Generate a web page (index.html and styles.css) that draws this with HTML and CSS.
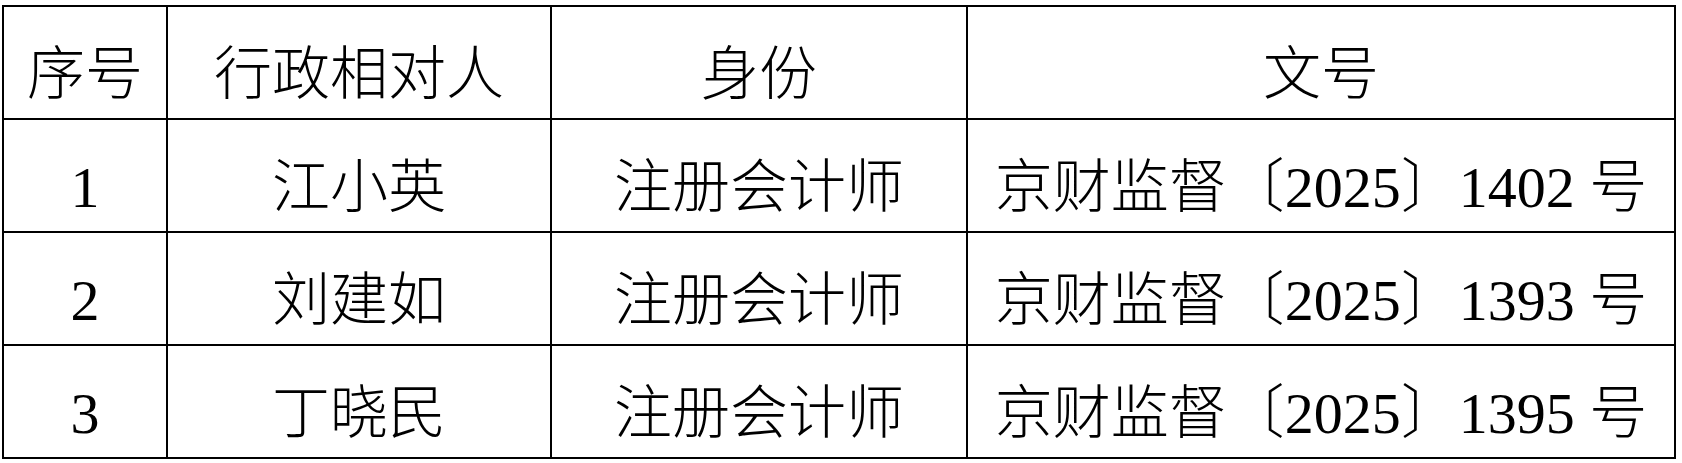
FILE: index.html
```html
<!DOCTYPE html>
<html lang="zh-CN">
<head>
<meta charset="utf-8">
<title>行政处罚信息</title>
<link rel="stylesheet" href="styles.css">
</head>
<body>
<table class="list">
  <colgroup>
    <col class="c1">
    <col class="c2">
    <col class="c3">
    <col class="c4">
  </colgroup>
  <tr>
    <td>序号</td>
    <td>行政相对人</td>
    <td>身份</td>
    <td>文号</td>
  </tr>
  <tr>
    <td>1</td>
    <td>江小英</td>
    <td>注册会计师</td>
    <td>京财监督〔2025〕1402 号</td>
  </tr>
  <tr>
    <td>2</td>
    <td>刘建如</td>
    <td>注册会计师</td>
    <td>京财监督〔2025〕1393 号</td>
  </tr>
  <tr>
    <td>3</td>
    <td>丁晓民</td>
    <td>注册会计师</td>
    <td>京财监督〔2025〕1395 号</td>
  </tr>
</table>
</body>
</html>
```
FILE: styles.css
```css
html, body {
  margin: 0;
  padding: 0;
  background: #fff;
}

.list {
  margin: 5px 0 0 2px;
  border-collapse: collapse;
  table-layout: fixed;
  width: 1672px;
  font-family: "Liberation Serif", "Noto Sans CJK SC", serif;
  font-size: 58px;
  font-weight: 300;
  color: #000;
}

.c1 { width: 164px; }
.c2 { width: 384px; }
.c3 { width: 416px; }
.c4 { width: 708px; }

.list tr {
  height: 113px;
}

.list td {
  border: 2px solid #000;
  padding: 24px 0 0 0;
  text-align: center;
  vertical-align: middle;
  line-height: 1;
  white-space: nowrap;
}
```
